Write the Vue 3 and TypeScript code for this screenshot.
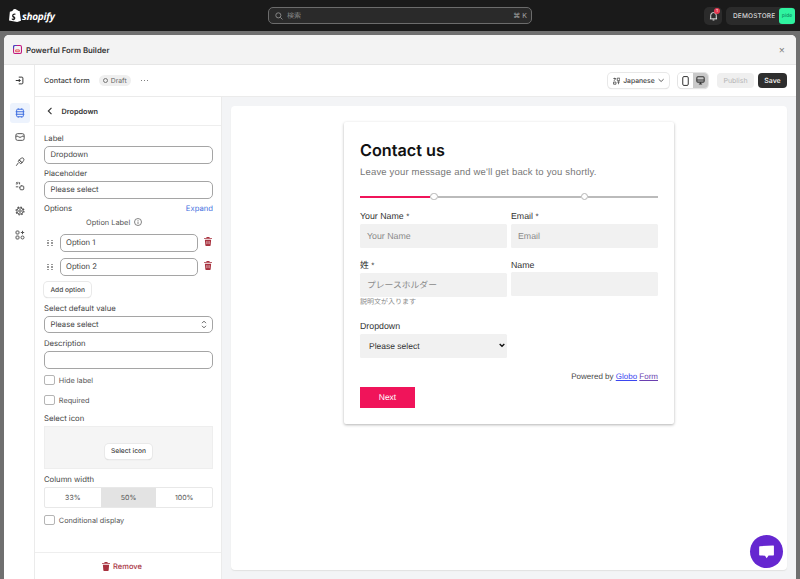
<script setup lang="ts">
const navIcons = ['form', 'mail', 'brush', 'integr', 'gear', 'apps']
const options = ['Option 1', 'Option 2']
const widths = ['33%', '50%', '100%']
</script>

<template>
  <div class="page">
    <header class="topbar">
      <div class="brand">
        <svg class="bag" width="12" height="15" viewBox="0 0 14 16"><path d="M1 3.600 4 2.700C4.500 1.200 5.500.3 6.600.3c.5 0 .9.200 1.200.500h.1c.5 0 1.100.400 1.400 1.200l.8-.2.100 0 .9.900 1.300.1L14 14.200 9.600 15.500.0 13.800 1 3.600Z" fill="#fff"/><path d="M7.800 5.500 7.300 7.300s-.6-.3-1.200-.2c-1 .1-1 .7-1 .9 0 .8 2.300 1.100 2.300 3 0 1.500-1 2.400-2.200 2.400-1.500 0-2.200-.9-2.200-.9l.4-1.300s.8.700 1.500.7c.4 0 .6-.3.600-.6 0-1-1.900-1.100-1.900-2.800 0-1.400 1-2.800 3-2.800.7 0 1.200.3 1.200.3Z" fill="#1a1a1a"/></svg>
        <span class="wordmark">shopify</span>
      </div>
      <div class="search">
        <svg width="8" height="8" viewBox="0 0 10 10" fill="none" stroke="#8a8a8a" stroke-width="1.200"><circle cx="4.200" cy="4.200" r="3.200"/><path d="m6.700 6.700 2.600 2.600"/></svg>
        <span class="search-text">検索</span>
        <span class="kbd">⌘ K</span>
      </div>
      <div class="top-right">
        <div class="bell">
          <svg width="9" height="10" viewBox="0 0 12 13" fill="none" stroke="#e8e8e8" stroke-width="1.300"><path d="M2.300 9.500V5.600a3.700 3.700 0 0 1 7.400 0v3.900l1 .8H1.300Z"/><path d="M4.800 11.800h2.400"/></svg>
          <span class="dot">1</span>
        </div>
        <div class="store">
          <span>DEMOSTORE</span>
          <span class="avatar">pide</span>
        </div>
      </div>
    </header>

    <section class="modal">
      <div class="modal-head">
        <svg width="9" height="9" viewBox="0 0 10 10" fill="none"><rect x=".6" y=".6" width="8.800" height="8.800" rx="1.500" stroke="#c2187e" stroke-width="1.200"/><path d="M.6 4V2A1.400 1.400 0 0 1 2 .6h2" stroke="#3d46c9" stroke-width="1.200"/><path d="M3 5.500h4v2H3z" stroke="#e5434b"/></svg>
        <span class="app-name">Powerful Form Builder</span>
        <span class="close">×</span>
      </div>

      <div class="modal-body">
        <nav class="rail">
          <div class="rail-top">
            <svg width="9" height="9" viewBox="0 0 12 12" fill="none" stroke="#333" stroke-width="1.300"><path d="M5 1.500h4.200a1.300 1.300 0 0 1 1.300 1.300v6.400a1.300 1.300 0 0 1-1.300 1.300H5"/><path d="M1 6h6M5 4l2 2-2 2"/></svg>
          </div>
          <div class="rail-list">
            <div v-for="(n, i) in navIcons" :key="n" class="rail-btn" :class="{ on: i === 0 }">
              <svg width="10" height="10" viewBox="0 0 12 12" fill="none" :stroke="i === 0 ? '#3f6fe0' : '#555'" stroke-width="1.200">
                <template v-if="n === 'form'"><rect x="2" y="1.500" width="8" height="9" rx="1"/><path d="M.8 4.500h10.400M.8 7.500h10.400M4 .5v1M8 .5v1M4 10.500v1M8 10.500v1"/></template>
                <template v-else-if="n === 'mail'"><rect x="1" y="2" width="10" height="8" rx="2"/><path d="M1 5h2.500l1 1.200h3L8.500 5H11"/></template>
                <template v-else-if="n === 'brush'"><path d="M5 3.500 7.500 1.500a2 2 0 0 1 3 2.500L8.500 7Z"/><path d="M5 3.500 8.500 7 6.500 8 4 5.500Z"/><path d="M4 7 1.500 10.500"/></template>
                <template v-else-if="n === 'integr'"><path d="M3.500 1v2M1 3.500h2M1.500 1.500l1.500 1.500M1 7h3M5.500 1.500V4"/><rect x="6" y="6" width="4.500" height="4.500" rx="1"/><path d="M5 8h1M8 5v1"/></template>
                <template v-else-if="n === 'gear'"><circle cx="6" cy="6" r="1.500"/><circle cx="6" cy="6" r="3.800"/><circle cx="6" cy="6" r="4.700" stroke-width="1.500" stroke-dasharray="1.900 1.790"/></template>
                <template v-else><rect x="1.200" y="1.200" width="3.600" height="3.600" rx="1"/><rect x="1.200" y="7.200" width="3.600" height="3.600" rx="1"/><circle cx="9" cy="9" r="1.800"/><path d="M7 3h4M9 1v4"/></template>
              </svg>
            </div>
          </div>
        </nav>

        <div class="workspace">
          <div class="toolbar">
            <span class="form-name">Contact form</span>
            <span class="badge"><i class="ring"></i>Draft</span>
            <span class="dots"><i></i><i></i><i></i></span>
            <div class="spacer"></div>
            <div class="lang">
              <svg width="8" height="8" viewBox="0 0 10 10" fill="none" stroke="#444" stroke-width="1.100"><path d="M.5 1.500h3.500M2.200.5v1M1 4.500c1.500-.5 2.500-1.500 2.800-3M.8 6.500h3.400v3H.8zM6 1h3.500v3.500H6zM6 6.500h3.500M7.700 5.500v4"/></svg>
              <span>Japanese</span>
              <svg width="7" height="5" viewBox="0 0 8 5" fill="none" stroke="#444" stroke-width="1.100"><path d="m.8.800 3.200 3 3.200-3"/></svg>
            </div>
            <div class="view-toggle">
              <span class="vt">
                <svg width="7" height="10" viewBox="0 0 8 12" fill="none" stroke="#333" stroke-width="1.200"><rect x=".7" y=".7" width="6.600" height="10.600" rx="1.500"/></svg>
              </span>
              <span class="vt active">
                <svg width="9" height="9" viewBox="0 0 11 11" fill="none" stroke="#333" stroke-width="1.300"><rect x="1" y="1" width="9" height="6.500" rx="1.300"/><path d="M1 4.800h9M5.500 7.500v2M3.500 9.800h4"/></svg>
              </span>
            </div>
            <span class="btn-publish">Publish</span>
            <span class="btn-save">Save</span>
          </div>

          <div class="content">
            <aside class="panel">
              <div class="panel-head">
                <svg width="6" height="8" viewBox="0 0 6 8" fill="none" stroke="#333" stroke-width="1.100"><path d="M4.500.8 1.300 4l3.200 3.200"/></svg>
                <span>Dropdown</span>
              </div>
              <div class="panel-body">
                <label class="lbl">Label</label>
                <div class="input">Dropdown</div>
                <label class="lbl g3">Placeholder</label>
                <div class="input">Please select</div>
                <div class="opt-head"><span class="lbl">Options</span><span class="expand">Expand</span></div>
                <div class="opt-col">
                  <span>Option Label</span>
                  <svg width="8" height="8" viewBox="0 0 8 8" fill="none" stroke="#666" stroke-width=".8"><circle cx="4" cy="4" r="3.500"/><path d="M4 3.500V6M4 2v.8"/></svg>
                </div>
                <div class="opt-list">
                  <div v-for="o in options" :key="o" class="opt-row">
                    <span class="grip"><i v-for="d in 6" :key="d"></i></span>
                    <div class="input opt-input">{{ o }}</div>
                    <svg class="trash" width="8" height="9" viewBox="0 0 9 10" fill="#a8323f"><path d="M3 0h3l.5 1H9v1H0V1h2.500ZM1 3h7l-.5 6.300a.8.8 0 0 1-.8.700H2.300a.8.8 0 0 1-.8-.7Z"/><path d="M3 4.500v3.500M4.500 4.500v3.500M6 4.500v3.500" stroke="#fff" stroke-width=".5"/></svg>
                  </div>
                </div>
                <span class="btn-small add">Add option</span>
                <label class="lbl g45">Select default value</label>
                <div class="input select">
                  <span>Please select</span>
                  <svg width="6" height="9" viewBox="0 0 6 10" fill="none" stroke="#555" stroke-width="1"><path d="M.8 3.500 3 1.300l2.200 2.200M.8 6.500 3 8.700l2.200-2.200"/></svg>
                </div>
                <label class="lbl g35">Description</label>
                <div class="input desc"></div>
                <div class="check first"><i></i>Hide label</div>
                <div class="check"><i></i>Required</div>
                <label class="lbl g5">Select icon</label>
                <div class="icon-box"><span class="btn-small">Select icon</span></div>
                <label class="lbl g4">Column width</label>
                <div class="segments">
                  <span v-for="(w, i) in widths" :key="w" :class="{ sel: i === 1 }">{{ w }}</span>
                </div>
                <div class="check last"><i></i>Conditional display</div>
              </div>
              <div class="panel-foot">
                <svg width="8" height="9" viewBox="0 0 9 10" fill="#a8323f"><path d="M3 0h3l.5 1H9v1H0V1h2.500ZM1 3h7l-.5 6.300a.8.8 0 0 1-.8.700H2.300a.8.8 0 0 1-.8-.7Z"/></svg>
                <span>Remove</span>
              </div>
            </aside>

            <main class="preview">
              <div class="canvas">
                <div class="form-card">
                  <h1>Contact us</h1>
                  <p class="sub">Leave your message and we'll get back to you shortly.</p>
                  <div class="steps">
                    <span class="seg pink"></span><i class="node"></i>
                    <span class="seg grey"></span><i class="node"></i>
                    <span class="seg grey end"></span>
                  </div>
                  <div class="grid">
                    <div class="field">
                      <label>Your Name <b>*</b></label>
                      <div class="box ph">Your Name</div>
                    </div>
                    <div class="field">
                      <label>Email <b>*</b></label>
                      <div class="box ph">Email</div>
                    </div>
                    <div class="field row2">
                      <label>姓 <b>*</b></label>
                      <div class="box ph">プレースホルダー</div>
                      <small>説明文が入ります</small>
                    </div>
                    <div class="field row2">
                      <label>Name</label>
                      <div class="box"></div>
                    </div>
                    <div class="field row3">
                      <label>Dropdown</label>
                      <div class="box dd">
                        <span>Please select</span>
                        <svg width="6" height="5" viewBox="0 0 7 5" fill="none" stroke="#111" stroke-width="1.600"><path d="m.8.800 2.700 2.700L6.200.8"/></svg>
                      </div>
                    </div>
                  </div>
                  <div class="powered">Powered by <a class="l1">Globo</a> <a class="l2">Form</a></div>
                  <span class="next">Next</span>
                </div>
              </div>
              <div class="chat">
                <svg width="17" height="15" viewBox="0 0 20 18" fill="#fff"><path d="M2 1.500 18 .5a.8.8 0 0 1 .9.800v10.500a.8.800 0 0 1-.8.800h-5.600L10.200 16l-2-3.200L2 12.500a.8.800 0 0 1-.8-.8V2.300a.8.800 0 0 1 .8-.8Z"/></svg>
              </div>
            </main>
          </div>
        </div>
      </div>
    </section>
  </div>
</template>

<style>
html, body { margin: 0; padding: 0; background: #6f6f6f; overflow: hidden; }
</style>

<style scoped>
.page { width: 800px; height: 579px; display: flex; flex-direction: column; font-family: Inter, "Noto Sans CJK JP", sans-serif; color: #303030; overflow: hidden; background: #6f6f6f; text-rendering: geometricPrecision; }
.topbar { height: 31px; flex: none; box-sizing: border-box; background: #1a1a1a; display: flex; align-items: center; padding: 0 5px 0 9px; }
.brand { display: flex; align-items: center; gap: 1px; width: 259px; flex: none; }
.wordmark { color: #fff; font: italic 700 10px "Open Sans", sans-serif; letter-spacing: -.25px; }
.search { width: 264px; height: 17.500px; box-sizing: border-box; flex: none; border: 1px solid #6c6c6c; border-radius: 5px; background: #2a2a2a; display: flex; align-items: center; padding: 0 4px 0 6px; gap: 4px; }
.search-text { font-size: 7px; color: #8a8a8a; }
.kbd { margin-left: auto; font-size: 7px; color: #a5a5a5; }
.top-right { margin-left: auto; display: flex; align-items: center; gap: 4px; }
.bell { width: 18px; height: 18px; background: #2b2b2b; border-radius: 5px; display: flex; align-items: center; justify-content: center; position: relative; }
.dot { position: absolute; top: 1px; right: 2px; width: 6px; height: 6px; border-radius: 50%; background: #e5384f; color: #fff; font-size: 4px; line-height: 6px; text-align: center; }
.store { width: 69px; height: 18px; box-sizing: border-box; background: #2b2b2b; border-radius: 5px; display: flex; align-items: center; justify-content: space-between; padding: 0 0 0 7px; color: #d8d8d8; font-size: 6.500px; font-weight: 500; letter-spacing: .15px; }
.avatar { width: 16px; height: 16px; background: #2ff3a0; border-radius: 3px; color: #0d8c63; font-size: 5px; line-height: 16px; text-align: center; letter-spacing: 0; }

.modal { flex: 1; min-height: 0; margin: 4px 4px 0; background: #fff; border-radius: 5px 5px 0 0; display: flex; flex-direction: column; overflow: hidden; }
.modal-head { height: 30px; flex: none; box-sizing: border-box; background: #f3f3f3; border-bottom: 1px solid #e6e6e6; display: flex; align-items: center; padding: 0 11px 0 9px; gap: 4px; }
.app-name { font-size: 7.800px; font-weight: 600; color: #333; }
.close { margin-left: auto; font-size: 10px; color: #8a8a8a; line-height: 1; }
.modal-body { flex: 1; min-height: 0; display: flex; }
.rail { width: 31px; flex: none; box-sizing: border-box; border-right: 1px solid #ebebeb; }
.rail-top { height: 32px; box-sizing: border-box; display: flex; align-items: center; justify-content: center; padding-bottom: 1px; }
.rail-list { display: flex; flex-direction: column; align-items: center; gap: 4.400px; padding: 6px 0 0 1px; }
.rail-btn { width: 20px; height: 20px; border-radius: 3px; display: flex; align-items: center; justify-content: center; }
.rail-btn.on { background: #edf3fd; }
.workspace { flex: 1; min-width: 0; display: flex; flex-direction: column; }
.toolbar { height: 32px; flex: none; box-sizing: border-box; border-bottom: 1px solid #ebebeb; display: flex; align-items: center; padding: 0 9px; }
.form-name { font-size: 7.300px; font-weight: 500; color: #444; }
.badge { margin-left: 9px; height: 11px; padding: 0 4px; background: #efefef; border-radius: 6px; color: #666; font-size: 6.800px; display: flex; align-items: center; gap: 3px; }
.ring { width: 3px; height: 3px; border: 1px solid #777; border-radius: 50%; display: block; }
.dots { margin-left: 10px; display: flex; gap: 1.500px; }
.dots i { width: 1.500px; height: 1.500px; background: #555; border-radius: 50%; display: block; }
.spacer { flex: 1; }
.lang { width: 61px; height: 15px; box-sizing: border-box; border-radius: 4px; background: #fff; box-shadow: 0 0 0 1px #e8e8e8, 0 1px 1px #ccc; display: flex; align-items: center; padding: 0 5px; gap: 3px; font-size: 6.800px; font-weight: 500; color: #444; margin-right: 9px; }
.lang svg:last-child { margin-left: auto; }
.view-toggle { display: flex; height: 15px; border-radius: 4px; overflow: hidden; box-shadow: 0 0 0 1px #e4e4e4, 0 1px 1px #ccc; margin-right: 9px; }
.vt { width: 15px; display: flex; align-items: center; justify-content: center; background: #fff; }
.vt.active { background: #c9c9c9; }
.btn-publish { width: 37px; height: 15px; background: #efefef; color: #b5b5b5; border-radius: 4px; font-size: 7px; line-height: 15px; text-align: center; margin-right: 4px; }
.btn-save { width: 29px; height: 15px; background: #2e2e2e; color: #fff; border-radius: 4px; font-size: 7px; line-height: 15px; text-align: center; font-weight: 500; }
.content { flex: 1; min-height: 0; display: flex; }
.panel { width: 187px; flex: none; box-sizing: border-box; border-right: 1px solid #ebebeb; display: flex; flex-direction: column; }
.panel-head { height: 29px; flex: none; box-sizing: border-box; border-bottom: 1px solid #eee; display: flex; align-items: center; padding: 0 0 0 12px; gap: 8.500px; font-size: 7.300px; font-weight: 600; color: #333; }
.panel-body { flex: 1; display: flex; flex-direction: column; padding: 5.500px 8px 0 9px; color: #444; }
.lbl { font-size: 7.700px; color: #444; line-height: 13px; display: block; }
.g3 { margin-top: 3px; }
.g35 { margin-top: 3.500px; }
.g45 { margin-top: 4.500px; }
.g5 { margin-top: 5px; }
.g4 { margin-top: 4px; }
.input { height: 17.500px; box-sizing: border-box; flex: none; border: 1px solid #a5a5a5; border-radius: 5px; background: #fff; display: flex; align-items: center; padding: 0 5.500px; font-size: 7.700px; color: #444; margin-top: 1.500px; }
.opt-head { display: flex; justify-content: space-between; align-items: center; margin-top: 3.500px; height: 13px; }
.expand { color: #3f6fe0; font-size: 7.700px; }
.opt-col { height: 13px; flex: none; display: flex; align-items: center; gap: 3.500px; padding-left: 42px; font-size: 7.400px; color: #555; margin-top: .5px; }
.opt-list { margin-top: 2.250px; }
.opt-row { display: flex; align-items: center; height: 24px; }
.grip { width: 6px; margin: 0 6.500px 0 3px; display: grid; grid-template-columns: 2px 2px; gap: 1px 2px; flex: none; }
.grip i { width: 1.500px; height: 1.500px; background: #999; display: block; }
.opt-input { flex: 1; margin-top: 0; min-width: 0; }
.trash { margin: -2px 1px 0 6.500px; flex: none; }
.btn-small { height: 15px; box-sizing: border-box; padding: 0 6.500px; background: #fff; border-radius: 4px; box-shadow: 0 0 0 1px #e9e9e9, 0 1px 1px #c8c8c8; font-size: 6.600px; font-weight: 500; color: #444; display: inline-flex; align-items: center; }
.add { align-self: flex-start; margin-top: 3.250px; }
.select { justify-content: space-between; margin-top: 1px; }
.check { display: flex; align-items: center; gap: 4px; height: 13px; margin-top: 7px; color: #555; font-size: 7.300px; }
.check.first { margin-top: 5px; }
.check i { width: 8.500px; height: 8.500px; box-sizing: content-box; border: 1px solid #b5b5b5; border-radius: 2px; display: block; flex: none; margin-left: .3px; }
.check.last { margin-top: 6px; }
.icon-box { height: 42.500px; flex: none; background: #f5f5f5; border: 1px solid #eee; display: flex; align-items: flex-end; justify-content: center; padding-bottom: 9px; box-sizing: border-box; margin-top: 1.500px; }
.segments { display: grid; grid-template-columns: 1fr 1fr 1fr; height: 20.500px; box-sizing: border-box; border: 1px solid #e8e8e8; border-radius: 2px; margin-top: 1.500px; }
.segments span { display: flex; align-items: center; justify-content: center; font-size: 7px; color: #555; }
.segments .sel { background: #e3e3e3; }
.panel-foot { height: 27px; flex: none; box-sizing: border-box; border-top: 1px solid #eee; display: flex; align-items: center; justify-content: center; gap: 3px; color: #a8323f; font-size: 7.500px; font-weight: 500; padding-right: 12px; }

.preview { flex: 1; min-width: 0; background: #f3f4f6; position: relative; padding: 9px; box-sizing: border-box; display: flex; }
.canvas { flex: 1; background: #fff; border-radius: 4px; box-shadow: 0 1px 1px #e2e2e2; display: flex; justify-content: center; align-items: flex-start; padding-top: 16px; }
.form-card { width: 330px; height: 302px; box-sizing: border-box; padding: 17px 16px 0; background: #fff; border-radius: 2px; box-shadow: 0 1px 3px rgba(0,0,0,.3); font-family: "Liberation Sans", "Noto Sans CJK JP", sans-serif; }
h1 { margin: 0; font: 600 16.200px/22px Inter, sans-serif; color: #111; }
.sub { margin: 5px 0 0; font-size: 9.500px; line-height: 13px; color: #777; letter-spacing: .18px; }
.steps { display: flex; align-items: center; margin-top: 13px; height: 9px; }
.seg { height: 2px; display: block; }
.seg.pink { width: 70px; background: #f0145a; flex: none; }
.seg.grey { flex: 1; background: #bbb; }
.seg.end { flex: none; width: 70px; }
.node { width: 5.500px; height: 5.500px; border: 1.500px solid #b5b5b5; background: #fff; border-radius: 50%; display: block; flex: none; }
.grid { display: grid; grid-template-columns: 147px 147px; column-gap: 4px; margin-top: 9px; }
.field label { display: block; font-size: 8.800px; line-height: 12px; color: #333; }
.field label b { font-weight: 400; font-size: 8px; }
.box { height: 23.500px; margin-top: 1px; background: #f1f1f1; border-radius: 1.500px; box-sizing: border-box; display: flex; align-items: center; padding: 0 7px; font-size: 8.800px; }
.ph { color: #8a8a8a; }
.row2 { margin-top: 11.500px; }
.field small { display: block; font-size: 7px; color: #888; line-height: 10px; margin-top: 1px; }
.row3 { margin-top: 12.500px; grid-column: 1; }
.dd { justify-content: space-between; color: #333; padding: 0 2px 0 9px; font-size: 8.500px; margin-top: 2px; }
.powered { text-align: right; margin-top: 13.500px; font-size: 8px; line-height: 12px; color: #444; }
.l1 { color: #3b46f0; text-decoration: underline; }
.l2 { color: #6a3fb0; text-decoration: underline; }
.next { display: block; width: 55px; height: 21px; line-height: 21px; background: #f0145a; color: #fff; font-size: 8.500px; font-weight: 500; text-align: center; margin-top: 4px; }
.chat { position: absolute; right: 13px; bottom: 11px; width: 33px; height: 33px; border-radius: 50%; background: #6527d0; display: flex; align-items: center; justify-content: center; padding-top: 1px; box-sizing: border-box; }
</style>
